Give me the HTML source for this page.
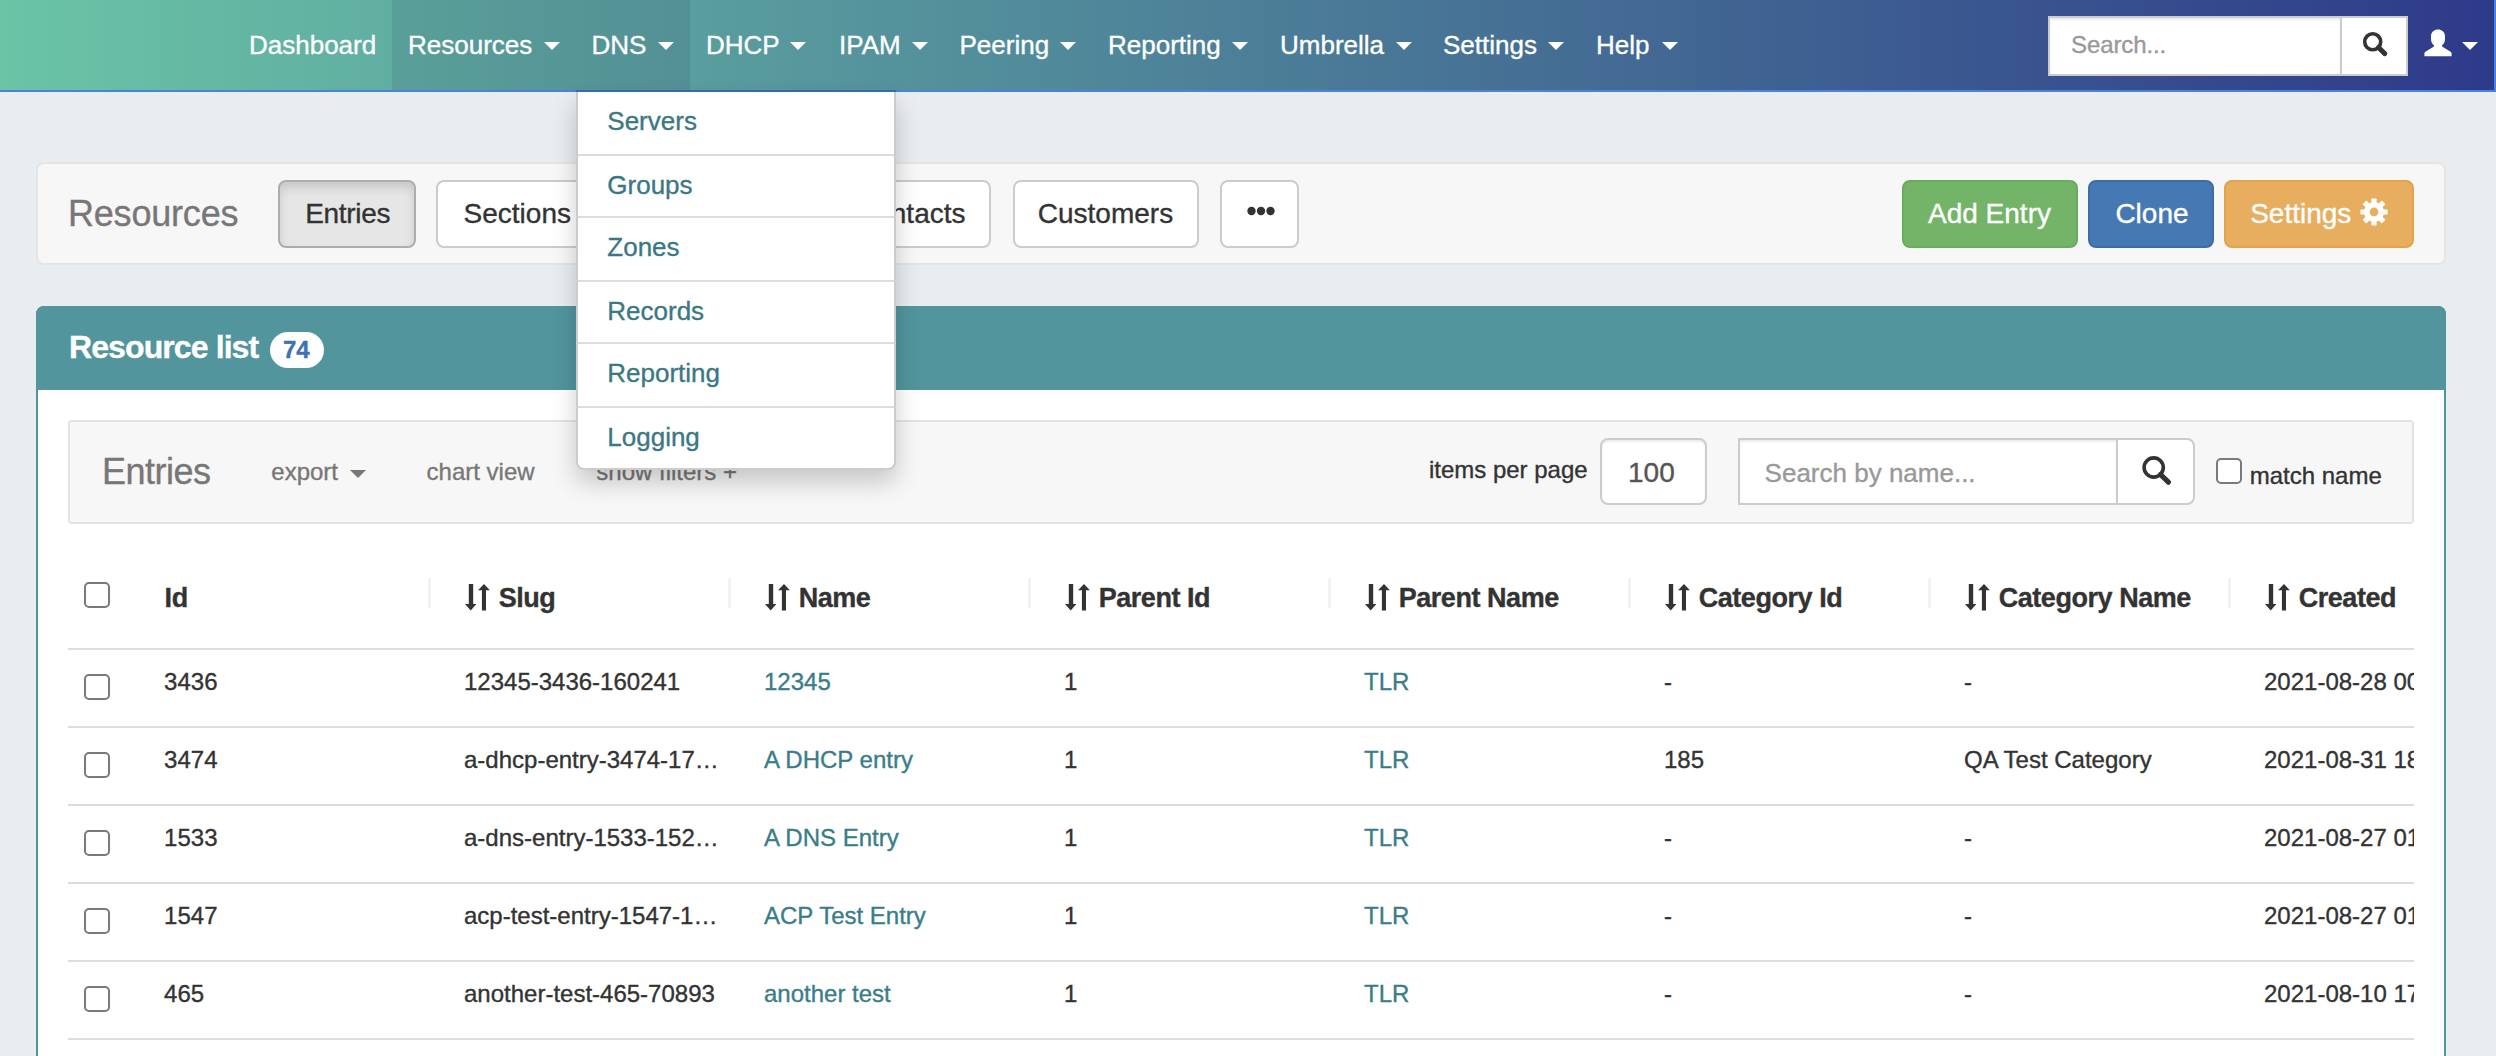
<!DOCTYPE html>
<html><head><meta charset="utf-8">
<style>
*{box-sizing:border-box;margin:0;padding:0}
html,body{width:2496px;height:1056px;overflow:hidden}
body{-webkit-text-stroke:0.35px currentColor;position:relative;background:#e9edf0;font-family:"Liberation Sans",sans-serif;color:#333}
.a{position:absolute;white-space:nowrap;line-height:1}
.nav{position:absolute;left:0;top:0;width:2496px;height:92px;background:linear-gradient(90deg,#6ac4a6 0%,#2e3a8a 100%);border-bottom:2px solid #4a82e4;border-right:2px solid #4a82e4}
.nt{position:absolute;top:31.9px;font-size:26px;color:#fff;line-height:1;white-space:nowrap}
.caret{position:absolute;width:0;height:0;border-left:8px solid transparent;border-right:8px solid transparent;border-top:8px solid #fff}
.btn{position:absolute;top:180px;height:68px;border:2px solid #ccc;border-radius:8px;background:#fff}
.bt{position:absolute;top:200.4px;font-size:28px;line-height:1;white-space:nowrap;color:#333}
.cb{position:absolute;width:26px;height:26px;border:2px solid #7a7a7a;border-radius:5px;background:#fff}
.th{position:absolute;top:585.1px;font-size:27px;letter-spacing:-0.45px;font-weight:700;line-height:1;white-space:nowrap;color:#333}
.td{position:absolute;font-size:24px;line-height:1;white-space:nowrap;color:#333}
.lk{color:#3a7d89}
.sep{position:absolute;top:578px;width:3px;height:30px;background:#f2f2f2}
.rb{position:absolute;left:68px;width:2346px;height:2px;background:#ddd}
.dd{position:absolute;font-size:26px;line-height:1;color:#3b7884;white-space:nowrap;left:607.3px}
.dsep{position:absolute;left:578px;width:316px;height:2px;background:#ddd}
</style></head><body>

<!-- NAVBAR -->
<div class="nav">
  <div style="position:absolute;left:392px;top:0;width:298px;height:90px;background:rgba(40,50,90,0.12)"></div>
  <div class="nt" style="left:249px">Dashboard</div>
  <div class="nt" style="left:408px">Resources</div><div class="caret" style="left:544px;top:42px"></div>
  <div class="nt" style="left:591.5px">DNS</div><div class="caret" style="left:657.6px;top:42px"></div>
  <div class="nt" style="left:706px">DHCP</div><div class="caret" style="left:789.8px;top:42px"></div>
  <div class="nt" style="left:839px">IPAM</div><div class="caret" style="left:912px;top:42px"></div>
  <div class="nt" style="left:959.5px">Peering</div><div class="caret" style="left:1059.6px;top:42px"></div>
  <div class="nt" style="left:1108px">Reporting</div><div class="caret" style="left:1232px;top:42px"></div>
  <div class="nt" style="left:1280px">Umbrella</div><div class="caret" style="left:1396px;top:42px"></div>
  <div class="nt" style="left:1443px">Settings</div><div class="caret" style="left:1547.6px;top:42px"></div>
  <div class="nt" style="left:1596px">Help</div><div class="caret" style="left:1661.8px;top:42px"></div>

  <!-- search -->
  <div style="position:absolute;left:2048px;top:16px;width:294px;height:60px;background:#fff;border:2px solid #ccc;box-shadow:inset 0 2px 2px rgba(0,0,0,.075)"></div>
  <div class="a" style="left:2071px;top:33.2px;font-size:24px;color:#999;letter-spacing:-0.1px">Search...</div>
  <div style="position:absolute;left:2340px;top:16px;width:68px;height:60px;background:#fff;border:2px solid #ccc"></div>
  <svg style="position:absolute;left:2361px;top:30px" width="30" height="30" viewBox="0 0 30 30"><circle cx="11.7" cy="11.8" r="8" fill="none" stroke="#333" stroke-width="3.6"/><line x1="17.5" y1="17.5" x2="23.8" y2="23.6" stroke="#333" stroke-width="5" stroke-linecap="round"/></svg>

  <!-- user -->
  <svg style="position:absolute;left:2424px;top:29px" width="28" height="28" viewBox="0 0 28 28"><path d="M14 0.6C10.3 0.6 7 2.8 7 7.4V10c0 3 1.3 5.2 2.9 6.2v1.4L1.4 22.8C0.6 23.3 0.4 24.2 0.4 25v2.3h27.2V25c0-.8-.2-1.7-1-2.2l-8.5-5.2v-1.4c1.6-1 2.9-3.2 2.9-6.2V7.4C21 2.8 17.7 0.6 14 0.6z" fill="#fff"/></svg>
  <div class="caret" style="left:2462px;top:42px"></div>
</div>

<!-- TOOLBAR WELL -->
<div style="position:absolute;left:36px;top:162px;width:2410px;height:103px;background:#f7f7f7;border:2px solid #e5e5e5;border-radius:8px"></div>
<div class="a" style="left:68px;top:196.1px;font-size:36px;color:#777;letter-spacing:-0.2px">Resources</div>
<div class="btn" style="left:278px;width:138px;background:#e6e6e6;border-color:#adadad;box-shadow:inset 0 6px 10px rgba(0,0,0,.125)"></div>
<div class="bt" style="left:305.2px;letter-spacing:-0.3px">Entries</div>
<div class="btn" style="left:436.4px;width:200px"></div>
<div class="bt" style="left:463.6px">Sections</div>
<div class="btn" style="left:800px;width:191.4px"></div>
<div class="bt" style="left:855px">Contacts</div>
<div class="btn" style="left:1012.6px;width:186.8px"></div>
<div class="bt" style="left:1037.8px">Customers</div>
<div class="btn" style="left:1220.2px;width:79.3px"></div>
<svg style="position:absolute;left:1247px;top:206px" width="28" height="10"><circle cx="4.5" cy="5" r="4.2" fill="#333"/><circle cx="14" cy="5" r="4.2" fill="#333"/><circle cx="23.5" cy="5" r="4.2" fill="#333"/></svg>

<div class="btn" style="left:1902px;width:176px;background:#74b468;border-color:#68ad5b"></div>
<div class="bt" style="left:1928px;color:#fff">Add Entry</div>
<div class="btn" style="left:2088px;width:126px;background:#4679b4;border-color:#3d6ca6"></div>
<div class="bt" style="left:2115.4px;color:#fff">Clone</div>
<div class="btn" style="left:2224px;width:190px;background:#e7ae5f;border-color:#e3a24b"></div>
<div class="bt" style="left:2250.2px;color:#fff">Settings</div>
<svg style="position:absolute;left:2360px;top:198px" width="28" height="28" viewBox="0 0 28 28"><g fill="#fff" transform="translate(14 14)"><rect x="-2.6" y="-13.6" width="5.2" height="27.2" rx="0.8"/><rect x="-2.6" y="-13.6" width="5.2" height="27.2" rx="0.8" transform="rotate(45)"/><rect x="-2.6" y="-13.6" width="5.2" height="27.2" rx="0.8" transform="rotate(90)"/><rect x="-2.6" y="-13.6" width="5.2" height="27.2" rx="0.8" transform="rotate(135)"/><circle r="10"/></g><circle cx="14" cy="14" r="4.4" fill="#e7ae5f"/></svg>

<!-- PANEL -->
<div style="position:absolute;left:36px;top:306px;width:2410px;height:800px;background:#fff;border:2px solid #52959d;border-radius:8px"></div>
<div style="position:absolute;left:36px;top:306px;width:2410px;height:84px;background:#52959d;border-radius:8px 8px 0 0"></div>
<div class="a" style="left:69px;top:330.6px;font-size:32px;font-weight:700;color:#fff;letter-spacing:-0.9px">Resource list</div>
<div style="position:absolute;left:270px;top:332px;width:54px;height:36px;border-radius:18px;background:#fff"></div>
<div class="a" style="left:283px;top:338px;font-size:24px;font-weight:700;color:#4170b3">74</div>

<!-- ENTRIES WELL -->
<div style="position:absolute;left:68px;top:420px;width:2346px;height:104px;background:#f7f7f7;border:2px solid #e3e3e3;border-radius:4px"></div>
<div class="a" style="left:102px;top:453.6px;font-size:36px;color:#777;letter-spacing:-0.5px">Entries</div>
<div class="a" style="left:271.3px;top:459.7px;font-size:24px;color:#777">export</div>
<div class="caret" style="left:350.4px;top:469.5px;border-top-color:#777"></div>
<div class="a" style="left:426.6px;top:459.7px;font-size:24px;color:#777">chart view</div>
<div class="a" style="left:596.3px;top:459.7px;font-size:24px;color:#777">show filters +</div>
<div class="a" style="left:1428.9px;top:458px;font-size:24px;color:#333">items per page</div>
<div style="position:absolute;left:1600.4px;top:438.3px;width:107px;height:67px;background:#fff;border:2px solid #ccc;border-radius:8px;box-shadow:inset 0 2px 2px rgba(0,0,0,.075)"></div>
<div class="a" style="left:1628px;top:458.5px;font-size:28px;color:#555">100</div>
<div style="position:absolute;left:1738.3px;top:438.3px;width:380px;height:67px;background:#fff;border:2px solid #ccc;border-radius:0;box-shadow:inset 0 2px 2px rgba(0,0,0,.075)"></div>
<div class="a" style="left:1764.6px;top:460.2px;font-size:26px;color:#999">Search by name...</div>
<div style="position:absolute;left:2116px;top:438.3px;width:79.3px;height:67px;background:#fff;border:2px solid #ccc;border-radius:0 8px 8px 0"></div>
<svg style="position:absolute;left:2140px;top:454px" width="34" height="34" viewBox="0 0 34 34"><circle cx="13.7" cy="13.5" r="9.6" fill="none" stroke="#333" stroke-width="3.6"/><line x1="20.5" y1="20.5" x2="28.4" y2="28.2" stroke="#333" stroke-width="5.2" stroke-linecap="round"/></svg>
<div class="cb" style="left:2216px;top:458.3px"></div>
<div class="a" style="left:2249.7px;top:463.6px;font-size:24px;color:#333">match name</div>

<!-- TABLE -->
<div style="position:absolute;left:68px;top:540px;width:2346px;height:520px;overflow:hidden">
<div style="position:absolute;left:-68px;top:-540px;width:2496px;height:1056px">
  <div class="cb" style="left:84.4px;top:582.4px"></div>
  <div class="th" style="left:164.6px">Id</div>
  <div class="sep" style="left:428.2px"></div>
  <div class="sep" style="left:728.2px"></div>
  <div class="sep" style="left:1028.2px"></div>
  <div class="sep" style="left:1328.2px"></div>
  <div class="sep" style="left:1628.2px"></div>
  <div class="sep" style="left:1928.2px"></div>
  <div class="sep" style="left:2228.2px"></div>
  <svg style="position:absolute;left:464.6px;top:583.5px" width="26" height="27" viewBox="0 0 26 27"><path d="M3.8 0h4.4v20.1h3.2L5.7 26.4 0 20.1h3.8z M19 0l5.9 6.3h-3.9v20.1h-4.1V6.3H13z" fill="#333"/></svg><svg style="position:absolute;left:764.6px;top:583.5px" width="26" height="27" viewBox="0 0 26 27"><path d="M3.8 0h4.4v20.1h3.2L5.7 26.4 0 20.1h3.8z M19 0l5.9 6.3h-3.9v20.1h-4.1V6.3H13z" fill="#333"/></svg><svg style="position:absolute;left:1064.6px;top:583.5px" width="26" height="27" viewBox="0 0 26 27"><path d="M3.8 0h4.4v20.1h3.2L5.7 26.4 0 20.1h3.8z M19 0l5.9 6.3h-3.9v20.1h-4.1V6.3H13z" fill="#333"/></svg><svg style="position:absolute;left:1364.6px;top:583.5px" width="26" height="27" viewBox="0 0 26 27"><path d="M3.8 0h4.4v20.1h3.2L5.7 26.4 0 20.1h3.8z M19 0l5.9 6.3h-3.9v20.1h-4.1V6.3H13z" fill="#333"/></svg><svg style="position:absolute;left:1664.6px;top:583.5px" width="26" height="27" viewBox="0 0 26 27"><path d="M3.8 0h4.4v20.1h3.2L5.7 26.4 0 20.1h3.8z M19 0l5.9 6.3h-3.9v20.1h-4.1V6.3H13z" fill="#333"/></svg><svg style="position:absolute;left:1964.6px;top:583.5px" width="26" height="27" viewBox="0 0 26 27"><path d="M3.8 0h4.4v20.1h3.2L5.7 26.4 0 20.1h3.8z M19 0l5.9 6.3h-3.9v20.1h-4.1V6.3H13z" fill="#333"/></svg><svg style="position:absolute;left:2264.6px;top:583.5px" width="26" height="27" viewBox="0 0 26 27"><path d="M3.8 0h4.4v20.1h3.2L5.7 26.4 0 20.1h3.8z M19 0l5.9 6.3h-3.9v20.1h-4.1V6.3H13z" fill="#333"/></svg>
  <div class="th" style="left:498.7px">Slug</div>
  <div class="th" style="left:798.7px">Name</div>
  <div class="th" style="left:1098.7px">Parent Id</div>
  <div class="th" style="left:1398.7px">Parent Name</div>
  <div class="th" style="left:1698.7px">Category Id</div>
  <div class="th" style="left:1998.7px">Category Name</div>
  <div class="th" style="left:2298.7px">Created</div>
  <div class="rb" style="top:648px"></div>
  <div class="cb" style="left:84.4px;top:673.8px"></div>
<div class="td" style="left:164.1px;top:669.9px">3436</div>
<div class="td" style="left:464px;top:669.9px">12345-3436-160241</div>
<div class="td lk" style="left:764px;top:669.9px">12345</div>
<div class="td" style="left:1064px;top:669.9px">1</div>
<div class="td lk" style="left:1364px;top:669.9px">TLR</div>
<div class="td" style="left:1664px;top:669.9px">-</div>
<div class="td" style="left:1964px;top:669.9px">-</div>
<div class="td" style="left:2264px;top:669.9px">2021-08-28 00:00:00</div>
<div class="rb" style="top:726px"></div>
<div class="cb" style="left:84.4px;top:751.8px"></div>
<div class="td" style="left:164.1px;top:747.9px">3474</div>
<div class="td" style="left:464px;top:747.9px">a-dhcp-entry-3474-17…</div>
<div class="td lk" style="left:764px;top:747.9px">A DHCP entry</div>
<div class="td" style="left:1064px;top:747.9px">1</div>
<div class="td lk" style="left:1364px;top:747.9px">TLR</div>
<div class="td" style="left:1664px;top:747.9px">185</div>
<div class="td" style="left:1964px;top:747.9px">QA Test Category</div>
<div class="td" style="left:2264px;top:747.9px">2021-08-31 18:00:00</div>
<div class="rb" style="top:804px"></div>
<div class="cb" style="left:84.4px;top:829.8px"></div>
<div class="td" style="left:164.1px;top:825.9px">1533</div>
<div class="td" style="left:464px;top:825.9px">a-dns-entry-1533-152…</div>
<div class="td lk" style="left:764px;top:825.9px">A DNS Entry</div>
<div class="td" style="left:1064px;top:825.9px">1</div>
<div class="td lk" style="left:1364px;top:825.9px">TLR</div>
<div class="td" style="left:1664px;top:825.9px">-</div>
<div class="td" style="left:1964px;top:825.9px">-</div>
<div class="td" style="left:2264px;top:825.9px">2021-08-27 01:00:00</div>
<div class="rb" style="top:882px"></div>
<div class="cb" style="left:84.4px;top:907.8px"></div>
<div class="td" style="left:164.1px;top:903.9px">1547</div>
<div class="td" style="left:464px;top:903.9px">acp-test-entry-1547-1…</div>
<div class="td lk" style="left:764px;top:903.9px">ACP Test Entry</div>
<div class="td" style="left:1064px;top:903.9px">1</div>
<div class="td lk" style="left:1364px;top:903.9px">TLR</div>
<div class="td" style="left:1664px;top:903.9px">-</div>
<div class="td" style="left:1964px;top:903.9px">-</div>
<div class="td" style="left:2264px;top:903.9px">2021-08-27 01:00:00</div>
<div class="rb" style="top:960px"></div>
<div class="cb" style="left:84.4px;top:985.8px"></div>
<div class="td" style="left:164.1px;top:981.9px">465</div>
<div class="td" style="left:464px;top:981.9px">another-test-465-70893</div>
<div class="td lk" style="left:764px;top:981.9px">another test</div>
<div class="td" style="left:1064px;top:981.9px">1</div>
<div class="td lk" style="left:1364px;top:981.9px">TLR</div>
<div class="td" style="left:1664px;top:981.9px">-</div>
<div class="td" style="left:1964px;top:981.9px">-</div>
<div class="td" style="left:2264px;top:981.9px">2021-08-10 17:00:00</div>
<div class="rb" style="top:1038px"></div>
</div>
</div>

<!-- DNS DROPDOWN -->
<div style="position:absolute;left:576px;top:90px;width:320px;height:2px;background:#3b68c4"></div>
<div style="position:absolute;left:576px;top:92px;width:320px;height:378px;background:#fff;border:2px solid rgba(0,0,0,.2);border-top:0;border-radius:0 0 8px 8px;box-shadow:0 12px 24px rgba(0,0,0,.2)"></div>
<div class="dd" style="top:108.1px">Servers</div>
<div class="dsep" style="top:154px"></div>
<div class="dd" style="top:172px">Groups</div>
<div class="dsep" style="top:216px"></div>
<div class="dd" style="top:234px">Zones</div>
<div class="dsep" style="top:280px"></div>
<div class="dd" style="top:298px">Records</div>
<div class="dsep" style="top:342px"></div>
<div class="dd" style="top:359.9px">Reporting</div>
<div class="dsep" style="top:406px"></div>
<div class="dd" style="top:423.6px">Logging</div>

</body></html>
